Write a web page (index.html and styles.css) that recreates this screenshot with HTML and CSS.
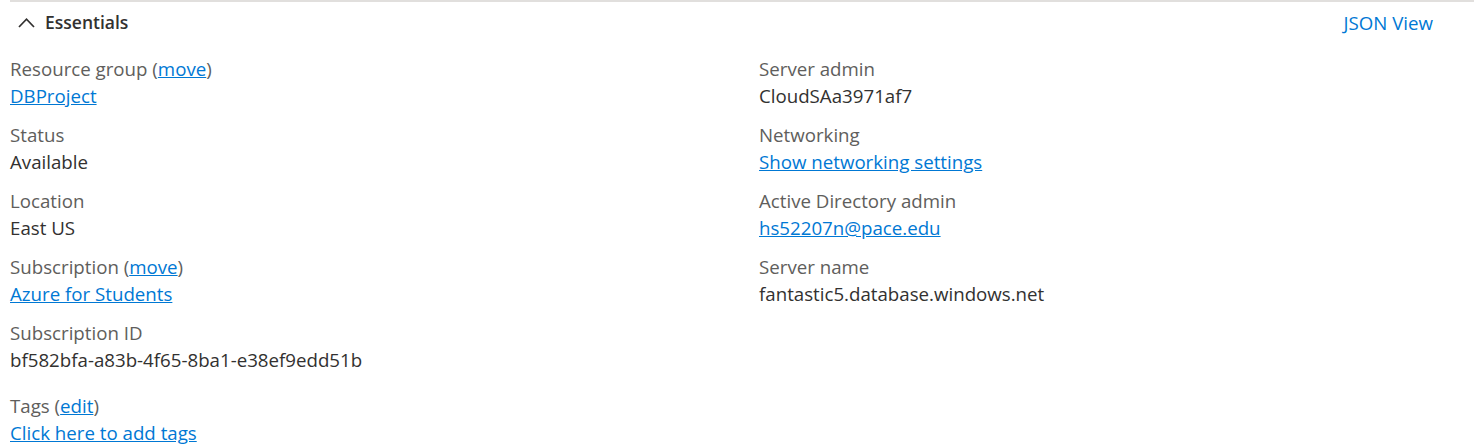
FILE: index.html
```html
<!DOCTYPE html>
<html>
<head>
<meta charset="utf-8">
<link rel="stylesheet" href="styles.css">
</head>
<body>
<section class="essentials">
  <header class="head">
    <button class="toggle">
      <svg class="chev" width="17" height="11" viewBox="0 0 17 11"><path d="M1 10 L8.5 2.2 L16 10" fill="none" stroke="#323130" stroke-width="1.7"/></svg>
      <span class="title">Essentials</span>
    </button>
    <a class="json" href="#">JSON View</a>
  </header>
  <div class="cols">
    <div class="col">
      <div class="item"><div class="label">Resource group (<a href="#">move</a>)</div><div class="value"><a href="#">DBProject</a></div></div>
      <div class="item"><div class="label">Status</div><div class="value">Available</div></div>
      <div class="item"><div class="label">Location</div><div class="value">East US</div></div>
      <div class="item"><div class="label">Subscription (<a href="#">move</a>)</div><div class="value"><a href="#">Azure for Students</a></div></div>
      <div class="item"><div class="label">Subscription ID</div><div class="value">bf582bfa-a83b-4f65-8ba1-e38ef9edd51b</div></div>
    </div>
    <div class="col">
      <div class="item"><div class="label">Server admin</div><div class="value">CloudSAa3971af7</div></div>
      <div class="item"><div class="label">Networking</div><div class="value"><a href="#">Show networking settings</a></div></div>
      <div class="item"><div class="label">Active Directory admin</div><div class="value"><a href="#">hs52207n@pace.edu</a></div></div>
      <div class="item"><div class="label">Server name</div><div class="value">fantastic5.database.windows.net</div></div>
    </div>
  </div>
  <div class="tags">
    <div class="label">Tags (<a href="#">edit</a>)</div>
    <div class="value"><a href="#">Click here to add tags</a></div>
  </div>
</section>
</body>
</html>
```
FILE: styles.css
```css
html, body { margin: 0; padding: 0; background: #fff; }
body { font-family: "Open Sans", "Noto Sans", sans-serif; font-size: 18.7px; color: #323130; }
.essentials { margin-left: 10px; border-top: 2px solid #e1dfdd; }
.head { display: flex; justify-content: space-between; align-items: center; height: 40px; padding-right: 41px; }
.toggle { display: flex; align-items: center; gap: 10px; background: none; border: 0; padding: 0 0 0 8px; font: inherit; color: #323130; }
.chev { display: block; }
.title { font-weight: 600; font-size: 17.5px; }
.json { color: #0078d4; text-decoration: none; font-size: 18.7px; }
.cols { display: grid; grid-template-columns: 749px 1fr; padding-top: 13px; }
.item { height: 66px; }
.label { color: #605e5c; line-height: 27px; }
.value { line-height: 27px; }
a { color: #0078d4; text-decoration: underline; }
.tags { padding-top: 7px; }
```
